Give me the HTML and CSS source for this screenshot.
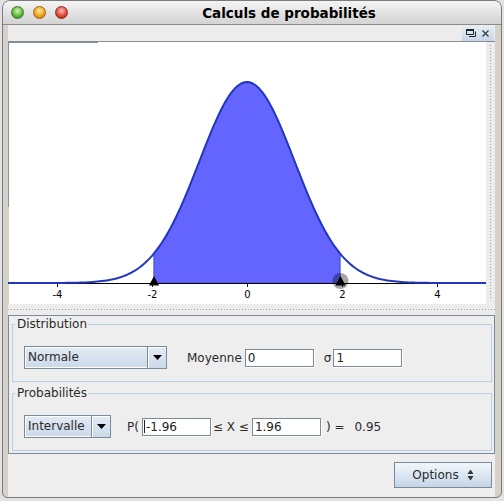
FILE: index.html
```html
<!DOCTYPE html>
<html>
<head lang="fr">
    <meta charset="UTF-8">
    <title>Calculs de probabilités</title>
    <link rel="stylesheet" href="styles.css">
</head>
<body>
    <div id="window">
        <div id="titlebar">
            <div class="lights">
                <span class="light green"></span>
                <span class="light orange"></span>
                <span class="light red"></span>
            </div>
            <div class="title">Calculs de probabilités</div>
        </div>
        <div id="frame">
            <div id="bar">
                <div class="bar-buttons">
                    <svg width="10" height="8" viewBox="0 0 10 8">
                        <rect x="0" y="0" width="8" height="2" fill="#222"/>
                        <path d="M0.5 0.5h7v5h-7z" fill="none" stroke="#222"/>
                        <path d="M3 7.5h6.5v-5" fill="none" stroke="#222"/>
                    </svg>
                    <svg width="7" height="7" viewBox="0 0 7 7">
                        <path d="M0.5 0.5l6 6M6.5 0.5l-6 6" fill="none" stroke="#333" stroke-width="1.1"/>
                    </svg>
                </div>
            </div>
            <div id="chartRow">
                <svg id="chart" width="478" height="262" viewBox="0 0 478 262">
                    <rect x="0" y="0" width="1" height="165" fill="#8395a9"/>
                    <rect x="0" y="165" width="1" height="97" fill="#d6d2ca"/>
                    <rect x="1" y="0" width="89" height="1" fill="#7d8ea2"/>
                    <path id="area" fill="#6464ff" stroke="#3a4ee0" stroke-width="1"/>
                    <line x1="0" y1="241.5" x2="478" y2="241.5" stroke="#000"/>
                    <g stroke="#000">
                        <line x1="49.5" y1="241" x2="49.5" y2="245"/>
                        <line x1="144.5" y1="241" x2="144.5" y2="245"/>
                        <line x1="239.5" y1="241" x2="239.5" y2="245"/>
                        <line x1="334.5" y1="241" x2="334.5" y2="245"/>
                        <line x1="429.5" y1="241" x2="429.5" y2="245"/>
                    </g>
                    <g class="ticks" text-anchor="middle">
                        <text x="49.5" y="256">-4</text>
                        <text x="144.5" y="256">-2</text>
                        <text x="239.5" y="256">0</text>
                        <text x="334.5" y="256">2</text>
                        <text x="429.5" y="256">4</text>
                    </g>
                    <path id="curve" fill="none" stroke="#2236c0" stroke-width="2"/>
                    <polygon points="146,234 141,243.5 151,243.5" fill="#000"/>
                    <circle cx="332.5" cy="239" r="8" fill="rgba(0,0,0,0.35)"/>
                    <polygon points="332.5,234 327.5,243.5 337.5,243.5" fill="#000"/>
                </svg>
                <div class="vsplit"></div>
            </div>
            <div class="hsplit"></div>
            <div id="panel">
                <fieldset class="group">
                    <legend>Distribution</legend>
                    <div class="row">
                        <div class="combo normale">
                            <span class="combo-text">Normale</span>
                            <span class="combo-arrow"><svg width="9" height="5" viewBox="0 0 9 5"><path d="M0 0h9l-4.5 5z" fill="#000"/></svg></span>
                        </div>
                        <span class="moyenne">Moyenne</span>
                        <span class="field f-moy">0</span>
                        <span class="sigma">σ</span>
                        <span class="field f-sigma">1</span>
                    </div>
                </fieldset>
                <fieldset class="group second">
                    <legend>Probabilités</legend>
                    <div class="row">
                        <div class="combo intervalle">
                            <span class="combo-text">Intervalle</span>
                            <span class="combo-arrow"><svg width="9" height="5" viewBox="0 0 9 5"><path d="M0 0h9l-4.5 5z" fill="#000"/></svg></span>
                        </div>
                        <span class="p-open">P(</span>
                        <span class="field f-low"><span class="caret"></span>-1.96</span>
                        <span class="leq">≤ X ≤</span>
                        <span class="field f-high">1.96</span>
                        <span class="p-close">) =</span>
                        <span class="result">0.95</span>
                    </div>
                </fieldset>
            </div>
            <div id="footer">
                <button class="options">Options
                    <svg width="7" height="12" viewBox="0 0 7 12">
                        <path d="M3.5 0.5L0.5 5h6z M0.5 7h6L3.5 11.5z" fill="#333"/>
                    </svg>
                </button>
            </div>
        </div>
    </div>
    <script>
        var x0 = 239, sx = 47.5, y0 = 241, h = 201;
        function px(v){ return (x0 + v * sx).toFixed(2); }
        function py(v){ return (y0 - h * Math.exp(-v * v / 2)).toFixed(2); }

        var d = '';
        for(var v = -5.1; v <= 5.1; v += 0.05){
            d += (d ? 'L' : 'M') + px(v) + ' ' + py(v);
        }
        document.getElementById('curve').setAttribute('d', d);

        var a = 'M' + px(-1.96) + ' ' + y0;
        for(var i = 0; i <= 98; i++){
            var t = -1.96 + i * 0.04;
            a += 'L' + px(t) + ' ' + py(t);
        }
        a += 'L' + px(1.96) + ' ' + y0 + 'Z';
        document.getElementById('area').setAttribute('d', a);
    </script>
</body>
</html>
```

FILE: styles.css
```css
*{
    padding: 0;
    margin: 0;
    box-sizing: border-box;
}
body{
    background: #e2e2e2;
    font-family: "DejaVu Sans", sans-serif;
    font-size: 12px;
    color: #2a2a2a;
}
#window{
    margin-left: 2px;
    width: 500px;
    height: 498px;
    border: 1px solid #7c7c7c;
    border-radius: 8px 8px 6px 5px;
    overflow: hidden;
    background: #d6d2ca;
    display: flex;
    flex-direction: column;
}
#titlebar{
    height: 24px;
    flex: none;
    display: flex;
    align-items: center;
    background: linear-gradient(#f4f4f4, #d3d3d3);
    border-bottom: 1px solid #8a8a8a;
}
.lights{
    display: flex;
    padding-left: 8px;
}
.light{
    width: 13px;
    height: 13px;
    border-radius: 50%;
    margin-right: 9px;
}
.light.green{
    background: radial-gradient(circle at 50% 35%, #d4f5b0 0, #62b83c 55%, #2f7a1c 100%);
    border: 1px solid #3d7428;
}
.light.orange{
    background: radial-gradient(circle at 50% 35%, #fbe7a0 0, #f0a61e 55%, #a8690a 100%);
    border: 1px solid #9a6410;
}
.light.red{
    background: radial-gradient(circle at 50% 35%, #f9c0b8 0, #e2493c 55%, #991f17 100%);
    border: 1px solid #8e2820;
}
.title{
    flex: 1;
    text-align: center;
    font-weight: bold;
    font-size: 13.5px;
    color: #000;
}
#frame{
    flex: 1;
    display: flex;
    flex-direction: column;
    padding: 0 6px 0 5px;
}
#bar{
    height: 17px;
    flex: none;
    background: #ececec;
    border-bottom: 1px solid #8c8c8c;
    display: flex;
    justify-content: flex-end;
    align-items: center;
    padding-right: 1px;
}
.bar-buttons{
    width: 32px;
    height: 15px;
    display: flex;
    align-items: center;
    justify-content: space-between;
    padding: 0 5px 0 4px;
    background: linear-gradient(#e4edf6, #c5d7ea);
}
#chartRow{
    height: 262px;
    flex: none;
    display: flex;
}
#chart{
    display: block;
    background: #fff;
}
.ticks{
    font-family: "DejaVu Sans", sans-serif;
    font-size: 10px;
    fill: #000;
}
.vsplit{
    flex: 1;
    background-color: #ececec;
    background-image: repeating-linear-gradient(to bottom, #9a9a9a 0 1px, transparent 1px 3px);
    background-size: 1px 255px;
    background-position: 4px 3px;
    background-repeat: no-repeat;
}
.hsplit{
    height: 11px;
    flex: none;
    background-color: #ececec;
    background-image: repeating-linear-gradient(to right, #9a9a9a 0 1px, transparent 1px 3px);
    background-size: 100% 1px;
    background-position: 0 5px;
    background-repeat: no-repeat;
}
#panel{
    height: 139px;
    flex: none;
    border: 1px solid #7a8a99;
    background: #eeeeee;
    padding: 2px 2px 2px 3px;
}
.group{
    border: 1px solid #b8cfe5;
    padding: 15px 0 12px 0;
    min-width: 0;
}
.group.second{
    margin-top: 5px;
}
legend{
    margin-left: 2px;
    padding: 0 1px 0 2px;
    line-height: 13px;
    font-size: 12px;
}
.row{
    display: flex;
    align-items: center;
    height: 23px;
    padding-left: 11px;
}
.combo{
    display: flex;
    height: 23px;
    border: 1px solid #7a8a99;
    background: linear-gradient(#e2ebf5, #cbd9e8);
}
.combo.normale{
    width: 143px;
}
.combo.intervalle{
    width: 87px;
}
.combo-text{
    flex: 1;
    padding-left: 2px;
    line-height: 19px;
    border: 1px solid #fff;
    border-right: none;
}
.combo-arrow{
    width: 19px;
    border-left: 1px solid #7a8a99;
    box-shadow: inset 1px 1px 0 #fff;
    display: flex;
    align-items: center;
    justify-content: center;
}
.field{
    width: 69px;
    height: 18px;
    border: 1px solid #7a8a99;
    box-shadow: 1px 1px 0 #fff;
    background: #fff;
    padding-left: 2px;
    line-height: 16px;
    color: #222;
    display: flex;
    align-items: center;
}
.caret{
    width: 1px;
    height: 13px;
    background: #222;
    margin-left: -1px;
    margin-right: 1px;
}
.moyenne{
    margin-left: 20px;
}
.f-moy{
    margin-left: 3px;
}
.sigma{
    margin-left: 10px;
}
.f-sigma{
    margin-left: 2px;
}
.p-open{
    margin-left: 16px;
}
.f-low{
    margin-left: 3px;
}
.leq{
    margin-left: 2px;
}
.f-high{
    margin-left: 3px;
}
.p-close{
    margin-left: 5px;
}
.result{
    margin-left: 10px;
}
#footer{
    flex: 1;
    display: flex;
    justify-content: flex-end;
    align-items: flex-start;
    padding: 8px 3px 0 0;
    background: #eeeeee;
}
.options{
    width: 98px;
    height: 26px;
    border: 1px solid #7a8a99;
    background: linear-gradient(#f3f7fb, #c4d5e8);
    font-family: "DejaVu Sans", sans-serif;
    font-size: 12px;
    color: #2a2a2a;
    display: flex;
    align-items: center;
    justify-content: center;
    gap: 8px;
}
```
